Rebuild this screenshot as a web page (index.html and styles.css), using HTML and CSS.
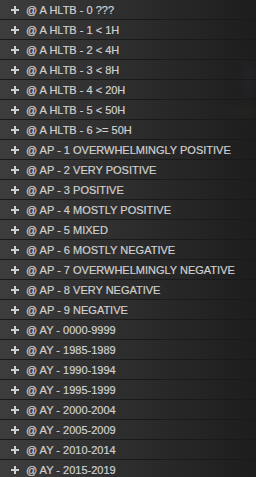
FILE: index.html
```html
<!DOCTYPE html>
<html lang="en">

<head>
    <meta charset="UTF-8">
    <title>tags</title>
    <link rel="stylesheet" href="styles.css">
</head>

<body>
    <div class="list">
        <div class="row"><span class="plus"></span>@ A HLTB - 0 ???</div>
        <div class="row"><span class="plus"></span>@ A HLTB - 1 &lt; 1H</div>
        <div class="row"><span class="plus"></span>@ A HLTB - 2 &lt; 4H</div>
        <div class="row"><span class="plus"></span>@ A HLTB - 3 &lt; 8H</div>
        <div class="row"><span class="plus"></span>@ A HLTB - 4 &lt; 20H</div>
        <div class="row"><span class="plus"></span>@ A HLTB - 5 &lt; 50H</div>
        <div class="row"><span class="plus"></span>@ A HLTB - 6 &gt;= 50H</div>
        <div class="row"><span class="plus"></span>@ AP - 1 OVERWHELMINGLY POSITIVE</div>
        <div class="row"><span class="plus"></span>@ AP - 2 VERY POSITIVE</div>
        <div class="row"><span class="plus"></span>@ AP - 3 POSITIVE</div>
        <div class="row"><span class="plus"></span>@ AP - 4 MOSTLY POSITIVE</div>
        <div class="row"><span class="plus"></span>@ AP - 5 MIXED</div>
        <div class="row"><span class="plus"></span>@ AP - 6 MOSTLY NEGATIVE</div>
        <div class="row"><span class="plus"></span>@ AP - 7 OVERWHELMINGLY NEGATIVE</div>
        <div class="row"><span class="plus"></span>@ AP - 8 VERY NEGATIVE</div>
        <div class="row"><span class="plus"></span>@ AP - 9 NEGATIVE</div>
        <div class="row"><span class="plus"></span>@ AY - 0000-9999</div>
        <div class="row"><span class="plus"></span>@ AY - 1985-1989</div>
        <div class="row"><span class="plus"></span>@ AY - 1990-1994</div>
        <div class="row"><span class="plus"></span>@ AY - 1995-1999</div>
        <div class="row"><span class="plus"></span>@ AY - 2000-2004</div>
        <div class="row"><span class="plus"></span>@ AY - 2005-2009</div>
        <div class="row"><span class="plus"></span>@ AY - 2010-2014</div>
        <div class="row"><span class="plus"></span>@ AY - 2015-2019</div>
    </div>
</body>

</html>
```
FILE: styles.css
```css
* {
    box-sizing: border-box;
}

body {
    margin: 0;
    background: #1b1b1b;
    font-family: "Liberation Sans", Arial, sans-serif;
    overflow: hidden;
}

.list {
    width: 256px;
    background:
        radial-gradient(ellipse 14px 30px at 250px 80px, rgba(90, 70, 110, .35), transparent),
        radial-gradient(ellipse 20px 10px at 245px 112px, rgba(80, 95, 60, .3), transparent),
        #1b1b1b;
}

.row {
    display: flex;
    align-items: center;
    height: 20px;
    padding-left: 11px;
    border-bottom: 1px solid #1a1a1a;
    background: linear-gradient(to right, rgba(62, 62, 62, .97), rgba(50, 50, 50, .85) 45%, rgba(30, 30, 30, .7));
    color: #d0d0d0;
    font-size: 11px;
    -webkit-text-stroke: 0.2px #d0d0d0;
    white-space: nowrap;
}

.plus {
    position: relative;
    flex: none;
    width: 8px;
    height: 8px;
    margin-right: 7px;
}

.plus::before,
.plus::after {
    content: "";
    position: absolute;
    background: #d0d0d0;
}

.plus::before {
    left: 0;
    top: 3px;
    width: 8px;
    height: 2px;
}

.plus::after {
    left: 3px;
    top: 0;
    width: 2px;
    height: 8px;
}
```
